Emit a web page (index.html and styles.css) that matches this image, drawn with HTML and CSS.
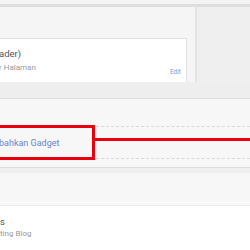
FILE: index.html
```html
<!DOCTYPE html>
<html lang="id">
<head>
    <meta charset="UTF-8">
    <title>Tata Letak</title>
    <link rel="stylesheet" href="styles.css">
</head>
<body>
    <div class="topbar"></div>

    <div class="upper">
        <div class="main-col">
            <div class="card">
                <div class="card-title">ader)</div>
                <div class="card-row">
                    <span class="card-sub">r Halaman</span>
                    <a class="edit" href="#">Edit</a>
                </div>
            </div>
        </div>
        <div class="side-col"></div>
    </div>

    <div class="band"></div>

    <section class="sidebar">
        <div class="add-gadget">
            <div class="mark"><a href="#">bahkan Gadget</a></div>
            <div class="pointer"></div>
        </div>
    </section>

    <section class="next">
        <div class="strip"></div>
        <div class="next-head"></div>
        <div class="widget">
            <div class="widget-title">s</div>
            <div class="widget-sub">ting Blog</div>
        </div>
    </section>
</body>
</html>
```

FILE: styles.css
```css
html {
    font-family: Roboto, Arial, sans-serif;
}

body {
    margin: 0;
    width: 250px;
    height: 250px;
    overflow: hidden;
    background-color: #fff;
}

.topbar {
    height: 4px;
    background-color: #f4f4f4;
    border-bottom: 3px solid #dedede;
}

.upper {
    display: flex;
    height: 75px;
}

.main-col {
    width: 195px;
    background-color: #f5f5f5;
    border-right: 2px solid #e4e4e4;
    overflow: hidden;
}

.side-col {
    flex: 1;
    background-color: #efefef;
}

.card {
    height: 60px;
    margin: 31px 8px 0 -20px;
    padding: 9px 5px 0 18px;
    background-color: #fff;
    border: 1px solid #e2e2e2;
}

.card-title {
    font-size: 9.5px;
    line-height: 12px;
    color: #555;
}

.card-row {
    display: flex;
    justify-content: space-between;
    margin-top: 3px;
}

.card-sub {
    font-size: 8px;
    line-height: 10px;
    color: #999;
}

.edit {
    margin-top: 4px;
    font-size: 6.5px;
    line-height: 10px;
    color: #7f9bd6;
    text-decoration: none;
}

.band {
    height: 16px;
    background-color: #eee;
    border-bottom: 1px solid #dcdcdc;
}

.sidebar {
    height: 68px;
    padding-top: 27px;
    box-sizing: border-box;
    background-color: #f7f7f7;
}

.add-gadget {
    display: flex;
    align-items: flex-start;
    height: 31px;
    margin: 0 -10px;
    border: 1px dashed #dadada;
}

.mark {
    display: flex;
    align-items: center;
    box-sizing: border-box;
    width: 105px;
    height: 35px;
    margin: -2px 0 0 -1px;
    padding-left: 6px;
    border: 3px solid #e8000e;
}

.mark a {
    font-size: 9px;
    color: #6a86d0;
    text-decoration: none;
}

.pointer {
    flex: 1;
    height: 3px;
    margin-top: 11px;
    background-color: #e8000e;
}

.strip {
    height: 5px;
    background-color: #efefef;
    border-top: 1px solid #dcdcdc;
}

.next-head {
    height: 32px;
    background-color: #f7f7f7;
    border-bottom: 1px solid #ececec;
}

.widget {
    padding-top: 10px;
}

.widget-title {
    font-size: 9.5px;
    line-height: 12px;
    color: #555;
}

.widget-sub {
    margin-top: 1px;
    font-size: 8px;
    line-height: 10px;
    color: #999;
}
```
